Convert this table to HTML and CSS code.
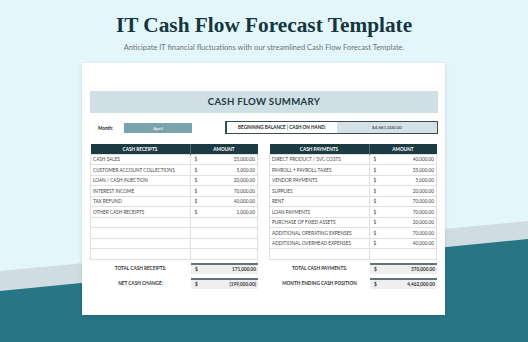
FILE: index.html
```html
<!DOCTYPE html>
<html lang="en">
<head>
    <meta charset="UTF-8">
    <meta name="viewport" content="width=device-width, initial-scale=1.0">
    <title>IT Cash Flow Forecast Template</title>
    <link rel="stylesheet" href="styles.css">
</head>
<body>
    <header class="intro">
        <h1>IT Cash Flow Forecast Template</h1>
        <p>Anticipate IT financial fluctuations with our streamlined Cash Flow Forecast Template.</p>
    </header>

    <div class="sheet">
        <div class="banner">CASH FLOW SUMMARY</div>

        <div class="meta">
            <span class="month-label">Month:</span>
            <span class="month-value">April</span>
            <div class="balance">
                <span class="balance-label">BEGINNING BALANCE | CASH ON HAND:</span>
                <span class="balance-value">$4,661,000.00</span>
            </div>
        </div>

        <div class="tables">
            <div class="side">
                <table>
                    <tr><th>CASH RECEIPTS</th><th>AMOUNT</th></tr>
                    <tr><td>CASH SALES</td><td><span>$</span>35,000.00</td></tr>
                    <tr><td>CUSTOMER ACCOUNT COLLECTIONS</td><td><span>$</span>5,000.00</td></tr>
                    <tr><td>LOAN / CASH INJECTION</td><td><span>$</span>20,000.00</td></tr>
                    <tr><td>INTEREST INCOME</td><td><span>$</span>70,000.00</td></tr>
                    <tr><td>TAX REFUND</td><td><span>$</span>40,000.00</td></tr>
                    <tr><td>OTHER CASH RECEIPTS</td><td><span>$</span>1,000.00</td></tr>
                    <tr><td></td><td></td></tr>
                    <tr><td></td><td></td></tr>
                    <tr><td></td><td></td></tr>
                    <tr><td></td><td></td></tr>
                </table>
                <div class="total">
                    <span class="total-label">TOTAL CASH RECEIPTS:</span>
                    <span class="total-box"><span>$</span>171,000.00</span>
                </div>
                <div class="total">
                    <span class="total-label">NET CASH CHANGE:</span>
                    <span class="total-box"><span>$</span>(199,000.00)</span>
                </div>
            </div>

            <div class="side">
                <table>
                    <tr><th>CASH PAYMENTS</th><th>AMOUNT</th></tr>
                    <tr><td>DIRECT PRODUCT / SVC COSTS</td><td><span>$</span>40,000.00</td></tr>
                    <tr><td>PAYROLL + PAYROLL TAXES</td><td><span>$</span>35,000.00</td></tr>
                    <tr><td>VENDOR PAYMENTS</td><td><span>$</span>5,000.00</td></tr>
                    <tr><td>SUPPLIES</td><td><span>$</span>20,000.00</td></tr>
                    <tr><td>RENT</td><td><span>$</span>70,000.00</td></tr>
                    <tr><td>LOAN PAYMENTS</td><td><span>$</span>70,000.00</td></tr>
                    <tr><td>PURCHASE OF FIXED ASSETS</td><td><span>$</span>20,000.00</td></tr>
                    <tr><td>ADDITIONAL OPERATING EXPENSES</td><td><span>$</span>70,000.00</td></tr>
                    <tr><td>ADDITIONAL OVERHEAD EXPENSES</td><td><span>$</span>40,000.00</td></tr>
                    <tr><td></td><td></td></tr>
                </table>
                <div class="total">
                    <span class="total-label">TOTAL CASH PAYMENTS:</span>
                    <span class="total-box"><span>$</span>370,000.00</span>
                </div>
                <div class="total">
                    <span class="total-label">MONTH ENDING CASH POSITION</span>
                    <span class="total-box"><span>$</span>4,462,000.00</span>
                </div>
            </div>
        </div>
    </div>
</body>
</html>
```

FILE: styles.css
```css
html, body {
    margin: 0;
    height: 100%;
}
body {
    position: relative;
    overflow: hidden;
    background-color: #e3f6fc;
    font-family: Lato, 'Open Sans', sans-serif;
}
body::before,
body::after {
    content: "";
    position: absolute;
    left: 0;
    right: 0;
    top: 0;
    bottom: 0;
    z-index: 0;
}
body::before {
    background: #cfdde2;
    clip-path: polygon(0 271px, 100% 221px, 100% 100%, 0 100%);
}
body::after {
    background: #277585;
    clip-path: polygon(0 291px, 100% 239px, 100% 100%, 0 100%);
}
.intro,
.sheet {
    position: relative;
    z-index: 1;
}
.intro {
    text-align: center;
    padding-top: 12px;
}
.intro h1 {
    margin: 0;
    font-family: 'Liberation Serif', 'DejaVu Serif', serif;
    font-weight: bold;
    font-size: 21.3px;
    line-height: 26px;
    color: #16363e;
}
.intro p {
    margin: 4px 0 0;
    font-size: 7.5px;
    line-height: 12px;
    color: #6b7378;
}
.sheet {
    width: 348px;
    height: 224px;
    margin: 9px 0 0 82px;
    padding: 28px 7px 0 8px;
    background: #fff;
    box-shadow: 0 1px 4px rgba(0, 0, 0, 0.12);
}
.banner {
    height: 22px;
    line-height: 22px;
    background: #d0dfe3;
    text-align: center;
    font-size: 9.6px;
    font-weight: bold;
    letter-spacing: 0.3px;
    color: #1d3a43;
}
.meta {
    display: flex;
    align-items: center;
    height: 13px;
    margin-top: 8px;
    font-size: 4.6px;
    font-weight: bold;
    color: #222;
}
.month-label {
    width: 26px;
    padding-left: 8px;
}
.month-value {
    width: 68px;
    height: 10px;
    line-height: 10px;
    background: #7aa4ad;
    color: #fff;
    text-align: center;
    font-weight: normal;
}
.balance {
    display: flex;
    height: 11px;
    margin-left: 33px;
    flex: 1;
    border: 1px solid #3d4a4f;
    border-left-width: 2px;
}
.balance-label {
    width: 110px;
    line-height: 11px;
    text-align: center;
}
.balance-value {
    flex: 1;
    line-height: 11px;
    background: #d4e1e6;
    text-align: center;
    font-weight: normal;
}
.tables {
    display: flex;
    gap: 11px;
    margin-top: 10px;
}
.side {
    width: 168px;
}
table {
    width: 100%;
    border-collapse: collapse;
    table-layout: fixed;
    font-size: 4.7px;
    line-height: 6px;
    color: #444;
}
tr {
    height: 10.5px;
}
tr:first-child {
    height: 10px;
}
th {
    padding: 0;
    background: #1b3a42;
    color: #fff;
    font-weight: bold;
    border-right: 1px solid #4d6a71;
}
th:last-child {
    width: 67px;
    border-right: none;
}
td {
    padding: 0 2px;
    border: 1px solid #e0e0e0;
    white-space: nowrap;
    text-align: right;
}
td:first-child {
    text-align: left;
}
td span,
.total-box span {
    float: left;
    padding-left: 2px;
}
.total {
    display: flex;
    align-items: center;
    margin-top: 3px;
    font-size: 4.7px;
    font-weight: bold;
    color: #333;
}
.total + .total {
    margin-top: 4px;
}
.total-label {
    width: 101px;
    text-align: center;
}
.total-box {
    flex: 1;
    height: 9px;
    line-height: 9px;
    padding: 0 2px;
    border-top: 2px solid #5e7479;
    background: #efefef;
    text-align: right;
}
```
